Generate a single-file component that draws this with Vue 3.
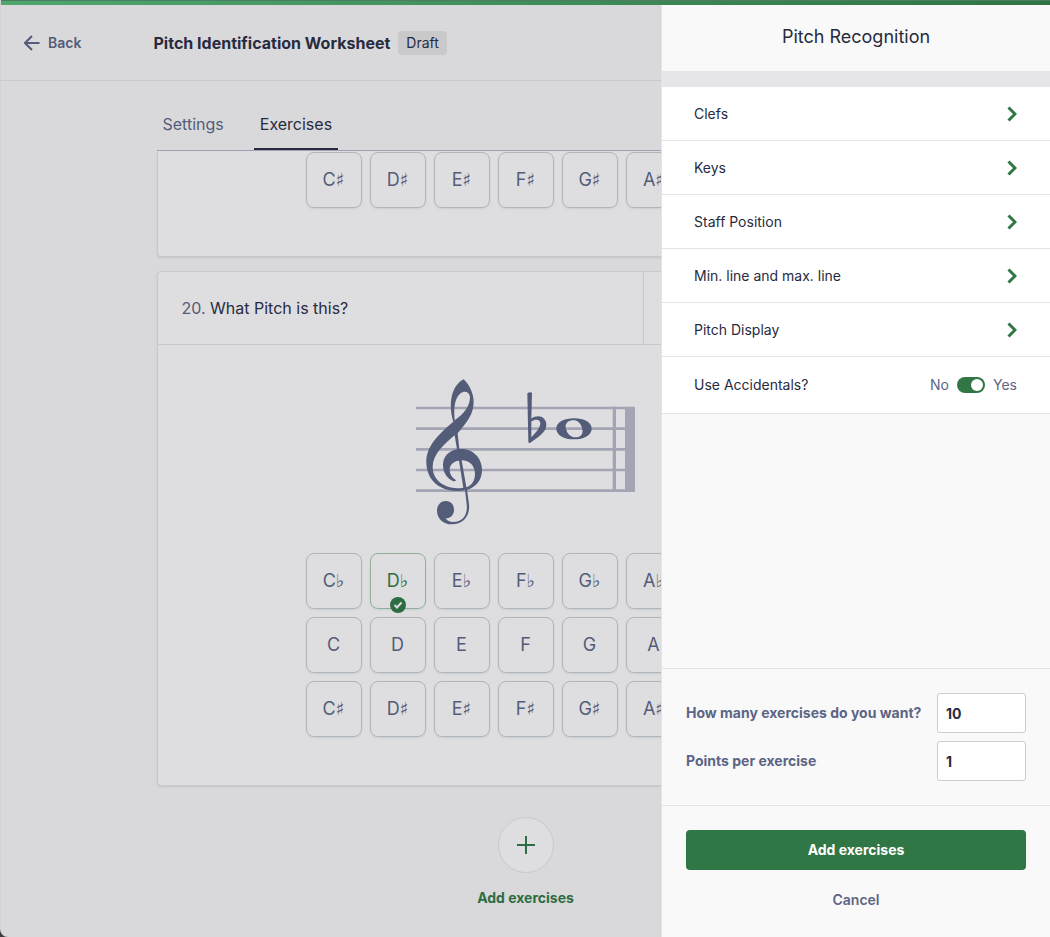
<script setup>
import { ref } from 'vue';

const options = ['Clefs', 'Keys', 'Staff Position', 'Min. line and max. line', 'Pitch Display'];
const notes = ['C', 'D', 'E', 'F', 'G', 'A'];
const accidentals = ['♭', '', '♯'];

const answer = ref('D♭');
const useAccidentals = ref(true);
const exerciseCount = ref('10');
const points = ref('1');
</script>

<template>
  <div class="page">
    <div class="progress"></div>
    <header class="topbar">
      <a class="back" href="#">
        <svg width="16" height="16" viewBox="0 0 16 16">
          <path d="M15.500 8H1M8 1L1 8l7 7" />
        </svg>
        Back
      </a>
      <div class="title">
        <h1>Pitch Identification Worksheet</h1>
        <span class="badge">Draft</span>
      </div>
    </header>

    <main class="content">
      <nav class="tabs">
        <a href="#" class="tab">Settings</a>
        <a href="#" class="tab active">Exercises</a>
      </nav>

      <section class="card previous">
        <div class="answers">
          <div class="row">
            <button v-for="note in notes" :key="note" type="button" class="key">
              {{ note }}<span class="accidental">♯</span>
            </button>
          </div>
        </div>
      </section>

      <section class="card">
        <div class="question">
          <h2><span class="number">20.</span> What Pitch is this?</h2>
          <div class="tools"></div>
        </div>
        <svg class="staff" width="219" height="147" viewBox="48 38 657 441">
          <g class="lines">
            <path d="M48 128H678M48 190H678M48 252H678M48 314H678M48 376H705" />
            <path class="bar" d="M643 124V380" />
            <path class="end" d="M690 124V380" />
          </g>
          <path
            class="ink"
            fill-rule="evenodd"
            d="M191 42C204 53 221 81 221 109C221 145 203 168 173 204L178 251C218 247 246 278 246 313C246 344 228 366 201 373L207 416C211 453 189 477 155 477C129 477 111 459 111 436C111 418 123 407 138 407C153 407 162 419 162 433C162 449 152 459 137 459C142 467 149 470 160 470C188 470 204 449 200 416L195 375C130 386 79 351 79 290C79 243 111 211 160 169C143 115 155 60 191 42ZM210 94C207 78 193 76 182 84C166 96 160 124 164 165C192 144 210 123 210 94ZM164 210C130 239 98 267 98 306C98 349 143 376 190 367L177 286C145 289 138 325 168 345C166 349 162 348 157 346C139 338 129 319 129 299C129 275 146 256 171 252ZM185 285L199 366C216 360 225 345 225 326C225 302 209 285 185 285Z"
          />
          <path
            class="ink"
            fill-rule="evenodd"
            d="M382 84Q389 79 396 82L394 160C413 145 439 154 439 178C439 203 410 217 389 234L385 231ZM394 169V216C407 203 421 186 421 174C421 162 406 160 394 169Z"
          />
          <path
            class="ink"
            fill-rule="evenodd"
            d="M522 159C552 159 575 171 575 190C575 209 552 222 522 222C492 222 469 209 469 190C469 171 492 159 522 159ZM516 165C500 167 493 179 499 194C504 210 516 217 530 216C545 214 551 202 546 187C541 171 530 163 516 165Z"
          />
        </svg>
        <div class="answers">
          <div v-for="accidental in accidentals" :key="accidental" class="row">
            <button
              v-for="note in notes"
              :key="note"
              type="button"
              class="key"
              :class="{ correct: note + accidental === answer }"
            >
              {{ note }}<span v-if="accidental" class="accidental">{{ accidental }}</span>
              <svg v-if="note + accidental === answer" class="check" width="16" height="16" viewBox="0 0 16 16">
                <circle cx="8" cy="8" r="8" />
                <path d="M4.500 8l2.500 2.500l4.500-5" />
              </svg>
            </button>
          </div>
        </div>
      </section>

      <button type="button" class="add">
        <span class="plus">
          <svg width="18" height="18" viewBox="0 0 18 18"><path d="M9 0V18M0 9H18" /></svg>
        </span>
        Add exercises
      </button>
    </main>

    <aside class="drawer">
      <h2 class="drawer-title">Pitch Recognition</h2>
      <div class="options">
        <button v-for="option in options" :key="option" type="button" class="option">
          {{ option }}
          <svg width="10" height="16" viewBox="0 0 10 16"><path d="M1.500 1.500L8 8l-6.500 6.500" /></svg>
        </button>
        <div class="option accidentals">
          <span>Use Accidentals?</span>
          <label class="switch">
            No
            <input v-model="useAccidentals" type="checkbox" aria-label="Use Accidentals?" />
            Yes
          </label>
        </div>
      </div>
      <form class="amounts" @submit.prevent>
        <label for="count">How many exercises do you want?</label>
        <input id="count" v-model="exerciseCount" type="text" />
        <label for="points">Points per exercise</label>
        <input id="points" v-model="points" type="text" />
      </form>
      <footer class="actions">
        <button type="button" class="primary">Add exercises</button>
        <button type="button" class="cancel">Cancel</button>
      </footer>
    </aside>
  </div>
</template>

<style>
body {
  background: #3c3c3e;
}
</style>

<style scoped>
.page {
  position: relative;
  box-sizing: border-box;
  min-height: 100vh;
  overflow: hidden;
  border-left: 1px solid #d2d2d4;
  border-bottom-left-radius: 8px;
  background: #d9d9db;
  color: #282b3e;
  font-family: Inter, "Liberation Sans", sans-serif;
  font-size: 16px;
  line-height: 24px;
}

.page *,
.page *::before {
  box-sizing: border-box;
}

svg {
  fill: none;
  flex: none;
}

a {
  color: inherit;
  text-decoration: none;
}

button {
  border: 0;
  padding: 0;
  background: none;
  color: inherit;
  font: inherit;
  cursor: pointer;
}

h1,
h2 {
  margin: 0;
  font-size: 16px;
  font-weight: 400;
}

.progress {
  height: 5px;
  border-top: 1px solid #4b7d5e;
  background: linear-gradient(90deg, #4fa76d, #2f7544);
}

.topbar {
  display: grid;
  grid-template-columns: 1fr minmax(auto, 744px) 1fr;
  align-items: center;
  height: 76px;
  border-bottom: 1px solid #c9c9cb;
}

.back {
  display: flex;
  align-items: center;
  gap: 8px;
  padding-left: 23px;
  color: #535c78;
  font-size: 14px;
  font-weight: 600;
}

.back svg {
  stroke: #535c78;
  stroke-width: 2;
}

.title {
  display: flex;
  align-items: center;
  gap: 8px;
}

h1 {
  font-weight: 700;
}

.badge {
  padding: 0 8px;
  border-radius: 4px;
  background: #c9c9cb;
  font-size: 14px;
}

.content {
  display: flex;
  flex-direction: column;
  max-width: 738px;
  margin: 0 auto;
  padding-top: 24px;
}

.tabs {
  display: flex;
  gap: 24px;
  border-bottom: 1px solid #9fa0b1;
}

.tab {
  padding: 7px 6px 12px;
  border-bottom: 2px solid transparent;
  color: #535c78;
}

.tab.active {
  border-color: #282b3e;
  color: #282b3e;
}

.card {
  margin-bottom: 14px;
  border: 1px solid #c9c9cb;
  border-radius: 4px;
  background: #dedee0;
  box-shadow: 0 1px 2px #c4c4c8;
}

.card.previous {
  border-top: 0;
  border-radius: 0 0 4px 4px;
}

.previous .answers {
  padding-top: 1px;
}

.question {
  display: flex;
  height: 73px;
  border-bottom: 1px solid #c9c9cb;
}

.question h2 {
  flex: 1;
  padding: 24px;
}

.number {
  color: #535c78;
}

.tools {
  width: 34%;
  border-left: 1px solid #c9c9cb;
}

.staff {
  display: block;
  margin: 33px auto 28px;
}

.lines {
  stroke: #a3a5b4;
  stroke-width: 8;
}

.lines .bar {
  stroke-width: 10;
}

.lines .end {
  stroke-width: 30;
}

.ink {
  fill: #535c78;
}

.answers {
  display: grid;
  gap: 8px;
  padding-bottom: 48px;
}

.row {
  display: grid;
  grid-template-columns: repeat(7, 56px);
  justify-content: center;
  gap: 8px;
}

.key {
  position: relative;
  height: 56px;
  border: 1px solid #afb5bc;
  border-radius: 8px;
  box-shadow: 0 1px 2px #cbccd0;
  color: #535c78;
  font-size: 18px;
}

.accidental {
  font-family: "DejaVu Sans", sans-serif;
  font-weight: 700;
  line-height: 1;
}

.key.correct {
  border-color: #8fb19b;
  color: #2e6d43;
}

.check {
  position: absolute;
  bottom: -5px;
  left: 19px;
}

.check circle {
  fill: #2e6d43;
}

.check path {
  stroke: #dedee0;
  stroke-width: 2;
}

.add {
  display: flex;
  flex-direction: column;
  align-items: center;
  align-self: center;
  gap: 13px;
  margin-top: 17px;
  color: #2e6d43;
  font-size: 14px;
  font-weight: 700;
}

.plus {
  display: grid;
  place-items: center;
  width: 56px;
  height: 56px;
  border: 1px solid #c9c9cb;
  border-radius: 50%;
  background: #dedee0;
}

.plus svg {
  stroke: #2e6d43;
  stroke-width: 2;
}

/* drawer over the page */
.drawer {
  position: absolute;
  top: 5px;
  right: 0;
  bottom: 0;
  display: flex;
  flex-direction: column;
  width: 389px;
  max-width: 100%;
  border-left: 1px solid #e4e4e6;
  background: #f9f9f9;
  font-size: 14px;
}

.drawer-title {
  padding: 20px 0 22px;
  border-bottom: 16px solid #e6e6e8;
  font-size: 18px;
  text-align: center;
}

.options {
  flex: 1;
}

.option {
  display: flex;
  align-items: center;
  justify-content: space-between;
  width: 100%;
  height: 54px;
  padding: 0 33px 0 32px;
  border-bottom: 1px solid #e4e4e6;
  background: #fff;
}

.option svg {
  stroke: #317645;
  stroke-width: 3;
}

.option.accidentals {
  height: 57px;
}

.switch {
  display: flex;
  align-items: center;
  gap: 8px;
  color: #5c6584;
}

.switch input {
  appearance: none;
  width: 28px;
  height: 16px;
  margin: 0;
  padding: 2px;
  border-radius: 8px;
  background: #a3a5b4;
}

.switch input::before {
  content: "";
  display: block;
  width: 12px;
  height: 12px;
  border-radius: 50%;
  background: #fff;
}

.switch input:checked {
  background: #317645;
}

.switch input:checked::before {
  margin-left: auto;
}

.amounts {
  display: grid;
  grid-template-columns: 1fr 89px;
  align-items: center;
  gap: 8px;
  padding: 24px;
  border-top: 1px solid #e4e4e6;
  border-bottom: 1px solid #e4e4e6;
  color: #5c6584;
  font-weight: 700;
}

.amounts input {
  width: 100%;
  height: 40px;
  padding: 0 8px;
  border: 1px solid #c8ced5;
  border-radius: 3px;
  background: #fff;
  color: #282b3e;
  font: inherit;
}

.actions {
  display: grid;
  gap: 10px;
  padding: 24px 24px 17px;
  font-weight: 700;
}

.primary,
.cancel {
  height: 40px;
}

.primary {
  border-radius: 4px;
  background: #317645;
  color: #fff;
}

.cancel {
  color: #5c6584;
  font-weight: 600;
}
</style>
